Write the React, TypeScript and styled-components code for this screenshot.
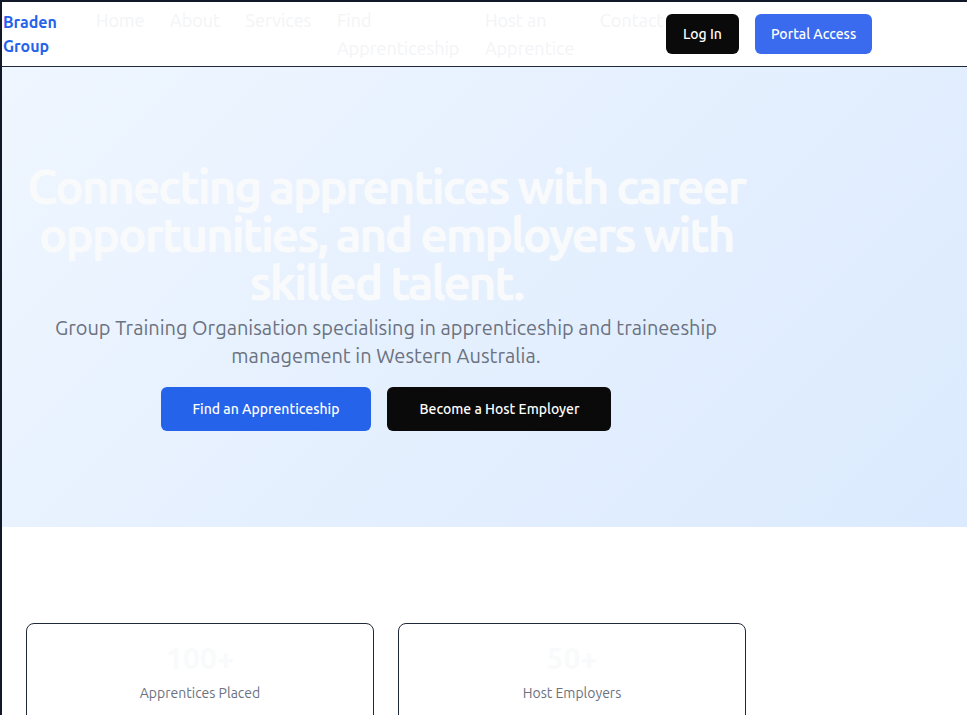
import React from "react";
import styled, { createGlobalStyle } from "styled-components";

const GlobalStyle = createGlobalStyle`
  html, body {
    margin: 0;
    padding: 0;
  }
  html::-webkit-scrollbar {
    width: 3px;
  }
  html::-webkit-scrollbar-track {
    background: #efefef;
  }
  html::-webkit-scrollbar-thumb {
    background: #c3c3c3;
  }
  body {
    background: #111827;
    font-family: "Ubuntu", "Open Sans", "Noto Sans", sans-serif;
    -webkit-font-smoothing: antialiased;
  }
  * {
    box-sizing: border-box;
  }
`;

const Page = styled.div`
  margin: 2px 0 0 2px;
  background: #ffffff;
  min-height: 2540px;
`;

const Nav = styled.nav`
  height: 65px;
  display: flex;
  align-items: center;
  padding: 0 1px;
  background: #ffffff;
  border-bottom: 1px solid #1f2937;
`;

const Brand = styled.a`
  width: min-content;
  flex-shrink: 0;
  font-size: 16px;
  line-height: 24px;
  font-weight: 700;
  color: #2563eb;
  text-decoration: none;
`;

const NavLinks = styled.div`
  display: flex;
  align-items: flex-start;
  gap: 25.5px;
  width: 570px;
  flex-shrink: 0;
  margin-left: 39px;
`;

const NavLink = styled.a`
  width: min-content;
  font-size: 18px;
  line-height: 28px;
  color: #f3f4f6;
  text-decoration: none;
`;

const NavActions = styled.div`
  display: flex;
  align-items: center;
  gap: 16px;
  position: relative;
`;

const NavButton = styled.button<{ $variant: "dark" | "blue" }>`
  height: 40px;
  padding: 0 ${(p) => (p.$variant === "dark" ? "17px" : "16px")};
  border: none;
  border-radius: 6px;
  font-family: inherit;
  font-size: 14px;
  font-weight: 500;
  color: #ffffff;
  background: ${(p) => (p.$variant === "dark" ? "#0a0a0a" : "#3a6bee")};
  cursor: pointer;
`;

const Hero = styled.section`
  background: linear-gradient(135deg, #eff6ff 0%, #dbeafe 100%);
  padding: 95px 0 96px;
`;

const HeroInner = styled.div`
  max-width: 768px;
  padding: 0 16px;
  text-align: center;
`;

const HeroTitle = styled.h1`
  margin: 0 0 8px;
  font-size: 48px;
  line-height: 48px;
  font-weight: 700;
  letter-spacing: -0.05em;
  color: #f9fafb;
`;

const HeroText = styled.p`
  max-width: 672px;
  margin: 0 auto;
  font-size: 20px;
  line-height: 28px;
  color: #6b7280;
`;

const HeroButtons = styled.div`
  display: flex;
  justify-content: center;
  gap: 16px;
  margin-top: 17px;
`;

const HeroButton = styled.button<{ $variant: "dark" | "blue" }>`
  height: 44px;
  padding: 0 32px;
  border: none;
  border-radius: 6px;
  font-family: inherit;
  font-size: 14px;
  font-weight: 500;
  color: #ffffff;
  background: ${(p) => (p.$variant === "dark" ? "#0a0a0a" : "#2563eb")};
  cursor: pointer;
`;

const Stats = styled.section`
  padding: 96px 0;
`;

const StatsGrid = styled.div`
  max-width: 768px;
  padding: 0 24px;
  display: grid;
  grid-template-columns: repeat(2, 1fr);
  gap: 24px;
`;

const StatCard = styled.div`
  border: 1px solid #1f2937;
  border-radius: 8px;
  padding: 16px 16px 24px;
  text-align: center;
`;

const StatValue = styled.div`
  font-size: 30px;
  line-height: 36px;
  font-weight: 700;
  color: #f9fafb;
  margin-bottom: 7px;
`;

const StatLabel = styled.div`
  font-size: 14px;
  line-height: 20px;
  color: #6b7280;
`;

const links = ["Home", "About", "Services", "Find Apprenticeship", "Host an Apprentice", "Contact"];

const stats = [
  { value: "100+", label: "Apprentices Placed" },
  { value: "50+", label: "Host Employers" },
];

export default function App() {
  return (
    <>
      <GlobalStyle />
      <Page>
        <Nav>
          <Brand href="#">Braden Group</Brand>
          <NavLinks>
            {links.map((l) => (
              <NavLink key={l} href="#">
                {l}
              </NavLink>
            ))}
          </NavLinks>
          <NavActions>
            <NavButton $variant="dark">Log In</NavButton>
            <NavButton $variant="blue">Portal Access</NavButton>
          </NavActions>
        </Nav>
        <Hero>
          <HeroInner>
            <HeroTitle>
              Connecting apprentices with career opportunities, and employers with skilled talent.
            </HeroTitle>
            <HeroText>
              Group Training Organisation specialising in apprenticeship and traineeship management in
              Western Australia.
            </HeroText>
            <HeroButtons>
              <HeroButton $variant="blue">Find an Apprenticeship</HeroButton>
              <HeroButton $variant="dark">Become a Host Employer</HeroButton>
            </HeroButtons>
          </HeroInner>
        </Hero>
        <Stats>
          <StatsGrid>
            {stats.map((s) => (
              <StatCard key={s.label}>
                <StatValue>{s.value}</StatValue>
                <StatLabel>{s.label}</StatLabel>
              </StatCard>
            ))}
          </StatsGrid>
        </Stats>
      </Page>
    </>
  );
}
